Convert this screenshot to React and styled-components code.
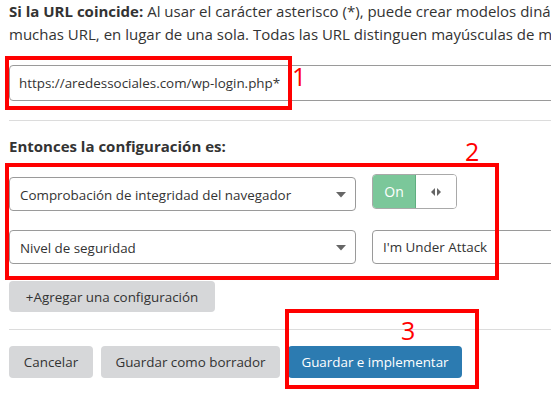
import React from "react";
import styled, { createGlobalStyle } from "styled-components";

const Global = createGlobalStyle`
  html, body { margin: 0; padding: 0; background: #fff; }
  body { font-family: "Open Sans", "Liberation Sans", sans-serif; font-size: 13.4px; color: #333; }
  * { box-sizing: border-box; }
`;

const Page = styled.div`
  position: relative;
  width: 551px;
  height: 396px;
  overflow: hidden;
  padding-left: 9px;
`;

const Intro = styled.p`
  margin: 0;
  font-size: 15px;
  line-height: 23px;
  white-space: nowrap;
  b { font-weight: 700; }
`;

const TextInput = styled.div`
  margin-top: ${(p) => p.$mt || 0}px;
  width: ${(p) => p.$w}px;
  height: ${(p) => p.$h}px;
  border: 1px solid #9a9a9a;
  border-radius: 4px;
  display: flex;
  align-items: center;
  padding-left: ${(p) => p.$pl || 9}px;
  color: #333;
  white-space: nowrap;
  flex-shrink: 0;
`;

const Divider = styled.hr`
  margin: ${(p) => p.$mt}px -20px 0 0;
  border: 0;
  border-top: 1px solid #dcdcdc;
  height: 0;
`;

const Heading = styled.h3`
  margin: 15px 0 0;
  font-size: 15px;
  font-weight: 700;
  line-height: 20px;
`;

const Row = styled.div`
  display: flex;
  align-items: flex-start;
  gap: 16px;
  margin-top: ${(p) => p.$mt}px;
  width: 600px;
`;

const Select = styled.div`
  margin-top: ${(p) => p.$mt || 0}px;
  width: 347px;
  height: 34px;
  border: 1px solid #9a9a9a;
  border-radius: 4px;
  display: flex;
  align-items: center;
  justify-content: space-between;
  padding: 2px 9px 0 10px;
  flex-shrink: 0;
`;

const Toggle = styled.div`
  display: flex;
  width: 85px;
  height: 35px;
  border: 1px solid #a9a9a9;
  border-radius: 4px;
  overflow: hidden;
  flex-shrink: 0;
`;

const ToggleOn = styled.div`
  width: 43px;
  background: #7bc79a;
  border-right: 1px solid #5fae80;
  color: #fff;
  display: flex;
  align-items: center;
  justify-content: center;
  font-size: 14px;
`;

const ToggleHandle = styled.div`
  flex: 1;
  display: flex;
  align-items: center;
  justify-content: center;
  background: #fff;
`;

const Button = styled.button`
  font-family: inherit;
  font-size: 13.4px;
  border: 0;
  border-radius: 4px;
  height: ${(p) => p.$h || 32}px;
  width: ${(p) => p.$w}px;
  background: ${(p) => (p.$primary ? "#2c7bb1" : "#d6d7d9")};
  color: ${(p) => (p.$primary ? "#fff" : "#333")};
  padding: 0;
  cursor: pointer;
  margin-top: ${(p) => p.$mt || 0}px;
  display: block;
`;

const Actions = styled.div`
  display: flex;
  gap: 8px;
  margin-top: 16px;
`;

const Mark = styled.div`
  position: absolute;
  left: ${(p) => p.$x}px;
  top: ${(p) => p.$y}px;
  width: ${(p) => p.$w}px;
  height: ${(p) => p.$h}px;
  border: 4px solid #ff0000;
  pointer-events: none;
`;

const MarkNum = styled.span`
  position: absolute;
  left: ${(p) => p.$x}px;
  top: ${(p) => p.$y}px;
  color: #ff0000;
  font-size: 25px;
  line-height: 25px;
  font-family: "Open Sans", sans-serif;
`;

const Caret = () => (
  <svg width="10" height="6" viewBox="0 0 10 6">
    <path d="M0 0 H10 L5 5.5 Z" fill="#666" />
  </svg>
);

const Arrows = () => (
  <svg width="10" height="8" viewBox="0 0 10 8">
    <path d="M0 4 L4 0 V8 Z" fill="#666" />
    <path d="M10 4 L6 0 V8 Z" fill="#666" />
  </svg>
);

export default function App() {
  return (
    <>
      <Global />
      <Page>
        <Intro>
          <b>Si la URL coincide:</b> Al usar el carácter asterisco (*), puede crear modelos dinámicos que coincidan con
          <br />
          muchas URL, en lugar de una sola. Todas las URL distinguen mayúsculas de minúsculas.
        </Intro>
        <TextInput $mt={19} $w={560} $h={36}>
          https://aredessociales.com/wp-login.php*
        </TextInput>
        <Divider $mt={19} />
        <Heading>Entonces la configuración es:</Heading>
        <Row $mt={18}>
          <Select $mt={3}>
            <span>Comprobación de integridad del navegador</span>
            <Caret />
          </Select>
          <Toggle>
            <ToggleOn>On</ToggleOn>
            <ToggleHandle>
              <Arrows />
            </ToggleHandle>
          </Toggle>
        </Row>
        <Row $mt={19}>
          <Select>
            <span>Nivel de seguridad</span>
            <Caret />
          </Select>
          <TextInput $w={220} $h={34} $pl={10}>
            I'm Under Attack
          </TextInput>
        </Row>
        <Button $w={206} $h={31} $mt={17}>+Agregar una configuración</Button>
        <Divider $mt={17} />
        <Actions>
          <Button $w={84}>Cancelar</Button>
          <Button $w={179}>Guardar como borrador</Button>
          <Button $w={174} $primary>Guardar e implementar</Button>
        </Actions>

        <Mark $x={5} $y={56} $w={287} $h={54} />
        <MarkNum $x={292} $y={64}>1</MarkNum>
        <Mark $x={5} $y={163} $w={494} $h={117} />
        <MarkNum $x={465} $y={139}>2</MarkNum>
        <Mark $x={285} $y={309} $w={194} $h={80} />
        <MarkNum $x={401} $y={318}>3</MarkNum>
      </Page>
    </>
  );
}
